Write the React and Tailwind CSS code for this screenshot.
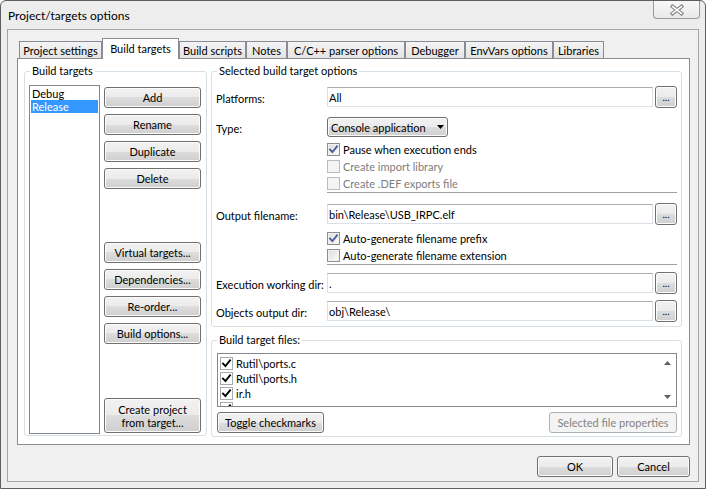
import React from "react";

const btnSkin =
  "rounded-[3px] border border-[#707070] bg-[linear-gradient(#f2f2f2_0%,#ebebeb_50%,#dddddd_50%,#cfcfcf_100%)] shadow-[inset_0_0_0_1px_#fcfcfc]";

function Button({ children, className = "" }) {
  return (
    <button
      type="button"
      className={`flex shrink-0 items-center justify-center text-center font-normal leading-[13px] ${btnSkin} ${className}`}
    >
      {children}
    </button>
  );
}

function Browse() {
  return (
    <Button className="ml-[2px] h-[22px] w-[22px] pt-[1px] text-[10px]">...</Button>
  );
}

function Group({ label, className = "", children }) {
  return (
    <div className={`relative shrink-0 rounded-[3px] border border-[#d5dfe5] ${className}`}>
      <span className="absolute -top-[8px] left-[5px] bg-white px-[2px] leading-[13px]">
        {label}
      </span>
      {children}
    </div>
  );
}

function Field({ value }) {
  return (
    <div className="flex h-[20px] w-[326px] items-center border border-[#dbdfe6] border-t-[#abadb3] bg-white pl-[1px]">
      {value}
    </div>
  );
}

function PathRow({ label, value, className = "" }) {
  return (
    <div className={`flex h-[22px] items-center ${className}`}>
      <span className="w-[111px] pt-[3px]">{label}</span>
      <Field value={value} />
      <Browse />
    </div>
  );
}

function Tick({ color = "#4a5f97" }) {
  return (
    <svg width="11" height="11" viewBox="0 0 11 11">
      <path
        d="M2 5.6 L4.4 8 L9 2.4"
        fill="none"
        stroke={color}
        strokeWidth="1.9"
        strokeLinecap="square"
      />
    </svg>
  );
}

function Check({ checked, disabled, label }) {
  return (
    <div className="flex h-[17px] items-center">
      <span
        className={
          disabled
            ? "flex h-[13px] w-[13px] items-center justify-center border border-[#bcbcbc] bg-[#f4f4f4]"
            : "flex h-[13px] w-[13px] items-center justify-center border border-[#8e8f8f] bg-[linear-gradient(135deg,#dcdcdc,#fdfdfd)] shadow-[inset_0_0_0_1px_#f1f1f1]"
        }
      >
        {checked && <Tick />}
      </span>
      <span className={disabled ? "ml-[3px] text-[#7d7d7d]" : "ml-[3px]"}>{label}</span>
    </div>
  );
}

function Sep({ className = "" }) {
  return <div className={`ml-[111px] h-[2px] border-t border-b border-t-[#a0a0a0] border-b-white ${className}`} />;
}

const tabs = [
  { name: "Project settings", w: "w-[83px]" },
  { name: "Build targets", w: "w-[77px]", active: true },
  { name: "Build scripts", w: "w-[67px]" },
  { name: "Notes", w: "w-[41px]" },
  { name: "C/C++ parser options", w: "w-[118px]" },
  { name: "Debugger", w: "w-[60px]" },
  { name: "EnvVars options", w: "w-[88px]" },
  { name: "Libraries", w: "w-[51px]" },
];

const files = ["Rutil\\ports.c", "Rutil\\ports.h", "ir.h", ""];

export default function App() {
  return (
    <div className="h-[489px] w-[706px] bg-white font-['Lato',sans-serif] text-[11px] font-normal leading-[13px] text-black">
      <div className="flex h-full w-full flex-col rounded-t-[6px] border border-[#5e5e5e] bg-[#ededed]">
        {/* Title bar */}
        <div className="flex h-[28px] shrink-0 items-start justify-between">
          <div className="pl-[7px] pt-[7px] text-[12px] leading-[15px]">Project/targets options</div>
          <div className="mr-[5px] flex h-[18px] w-[47px] items-center justify-center rounded-b-[4px] border border-t-0 border-[#9a9a9a] bg-[linear-gradient(#f8f8f8,#e9e9e9)]">
            <svg width="14" height="12" viewBox="0 0 14 12">
              <path d="M2.5 2.5 L11.5 9.5 M11.5 2.5 L2.5 9.5" stroke="#7a7a7a" strokeWidth="3.6" strokeLinecap="square" />
              <path d="M2.5 2.5 L11.5 9.5 M11.5 2.5 L2.5 9.5" stroke="#ffffff" strokeWidth="1.6" strokeLinecap="square" />
            </svg>
          </div>
        </div>

        {/* Client area */}
        <div className="mx-[6px] flex h-[453px] shrink-0 flex-col border border-[#a6a6a6] bg-[#f0f0f0]">
          <div className="pl-[9px] pt-[8px]">
            {/* Tabs */}
            <div className="relative z-10 -mb-px flex h-[21px] items-end pl-[2px]">
              {tabs.map((t) =>
                t.active ? (
                  <div
                    key={t.name}
                    className={`flex h-[21px] items-center justify-center border border-b-0 border-[#898c95] bg-white pb-[1px] ${t.w}`}
                  >
                    {t.name}
                  </div>
                ) : (
                  <div
                    key={t.name}
                    className={`mb-px flex h-[17px] items-center justify-center border border-b-0 border-[#898c95] bg-[linear-gradient(#f4f4f4,#e4e4e4)] ${t.w}`}
                  >
                    {t.name}
                  </div>
                ),
              )}
            </div>

            {/* Tab page */}
            <div className="flex h-[387px] w-[673px] gap-[4px] border border-[#898c95] bg-white pl-[6px] pt-[12px]">
              {/* Left group */}
              <Group label="Build targets" className="flex h-[365px] w-[183px] gap-[4px] pl-[4px] pt-[13px]">
                <div className="h-[349px] w-[71px] shrink-0 border border-[#828790] bg-white pt-[1px]">
                  <div className="mx-px h-[13px] pl-px">Debug</div>
                  <div className="mx-px h-[13px] bg-[#3399ff] pl-px text-white">Release</div>
                </div>
                <div className="flex h-[349px] w-[97px] flex-col pt-[2px]">
                  <div className="flex flex-col gap-[6px]">
                    <Button className="h-[21px] w-full">Add</Button>
                    <Button className="h-[21px] w-full">Rename</Button>
                    <Button className="h-[21px] w-full">Duplicate</Button>
                    <Button className="h-[21px] w-full">Delete</Button>
                  </div>
                  <div className="mt-[53px] flex flex-col gap-[6px]">
                    <Button className="h-[21px] w-full">Virtual targets...</Button>
                    <Button className="h-[21px] w-full">Dependencies...</Button>
                    <Button className="h-[21px] w-full">Re-order...</Button>
                    <Button className="h-[21px] w-full">Build options...</Button>
                  </div>
                  <Button className="mt-auto mb-px h-[35px] w-full">
                    Create project
                    <br />
                    from target...
                  </Button>
                </div>
              </Group>

              {/* Right column */}
              <div className="flex w-[471px] flex-col gap-[13px]">
                <Group label="Selected build target options" className="flex h-[256px] flex-col px-[4px] pt-[14px]">
                  <PathRow label="Platforms:" value="All" />
                  <div className="mt-[9px] flex h-[20px] items-center">
                    <span className="w-[111px] pt-[2px]">Type:</span>
                    <div className={`flex h-[20px] w-[121px] items-center justify-between pl-[3px] pr-[3px] ${btnSkin}`}>
                      <span>Console application</span>
                      <svg width="7" height="4" viewBox="0 0 7 4">
                        <path d="M0 0 H7 L3.5 4 Z" fill="#000" />
                      </svg>
                    </div>
                  </div>
                  <div className="mt-[4px] flex flex-col pl-[111px]">
                    <Check checked label="Pause when execution ends" />
                    <Check disabled label="Create import library" />
                    <Check disabled label="Create .DEF exports file" />
                  </div>
                  <Sep className="mt-0" />
                  <PathRow className="mt-[9px]" label="Output filename:" value={"bin\\Release\\USB_IRPC.elf"} />
                  <div className="mt-[5px] flex flex-col pl-[111px]">
                    <Check checked label="Auto-generate filename prefix" />
                    <Check label="Auto-generate filename extension" />
                  </div>
                  <Sep className="mt-0" />
                  <PathRow className="mt-[6px]" label="Execution working dir:" value="." />
                  <PathRow className="mt-[6px]" label="Objects output dir:" value={"obj\\Release\\"} />
                </Group>

                <Group label="Build target files:" className="flex h-[97px] flex-col pl-[5px] pt-[12px]">
                  <div className="flex h-[54px] w-[460px] overflow-hidden border border-[#828790] bg-white">
                    <div className="flex-1 pl-[2px] pt-[2px]">
                      {files.map((f, i) => (
                        <div key={i} className="flex h-[15px] items-center">
                          <span className="flex h-[13px] w-[13px] items-center justify-center border border-[#a9a9a9] bg-white">
                            <Tick color="#000" />
                          </span>
                          <span className="ml-[3px]">{f}</span>
                        </div>
                      ))}
                    </div>
                    <div className="flex w-[17px] flex-col items-center justify-between py-[7px]">
                      <svg width="7" height="4" viewBox="0 0 7 4">
                        <path d="M0 4 H7 L3.5 0 Z" fill="#606060" />
                      </svg>
                      <svg width="7" height="4" viewBox="0 0 7 4">
                        <path d="M0 0 H7 L3.5 4 Z" fill="#606060" />
                      </svg>
                    </div>
                  </div>
                  <div className="mt-[5px] flex w-[460px] justify-between">
                    <Button className="h-[21px] w-[107px]">Toggle checkmarks</Button>
                    <button
                      type="button"
                      className="flex h-[21px] w-[128px] items-center justify-center rounded-[3px] border border-[#adb2b5] bg-[#f4f4f4] text-[#838383]"
                    >
                      Selected file properties
                    </button>
                  </div>
                </Group>
              </div>
            </div>
          </div>

          {/* Footer */}
          <div className="mt-[11px] flex justify-end gap-[4px] pr-[8px]">
            <Button className="h-[21px] w-[76px]">OK</Button>
            <Button className="h-[21px] w-[73px]">Cancel</Button>
          </div>
        </div>
      </div>
    </div>
  );
}
